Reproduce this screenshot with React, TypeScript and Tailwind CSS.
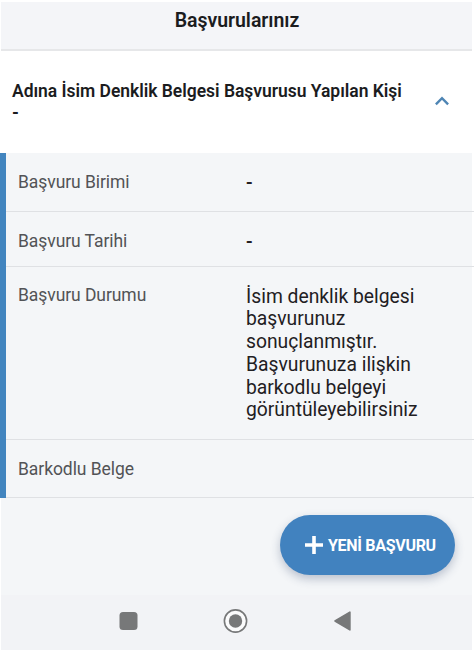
import React from 'react';
import clsx from 'clsx';

interface DetailRow {
  label: string;
  value?: string;
  rowClass: string;
  valueClass?: string;
}

const rows: DetailRow[] = [
  { label: 'Başvuru Birimi', value: '-', rowClass: 'h-[59px] pt-[18px]', valueClass: 'pt-px font-medium' },
  { label: 'Başvuru Tarihi', value: '-', rowClass: 'h-[55px] pt-[18px]', valueClass: 'pt-px font-medium' },
  {
    label: 'Başvuru Durumu',
    value: 'İsim denklik belgesi başvurunuz sonuçlanmıştır. Başvurunuza ilişkin barkodlu belgeyi görüntüleyebilirsiniz',
    rowClass: 'h-[173px] pt-[17px]',
    valueClass: 'mt-[1.5px]',
  },
  { label: 'Barkodlu Belge', rowClass: 'h-[58px] pt-[18px]' },
];

const Header: React.FC = () => (
  <header className="h-[49px] border-b-2 border-[#e6e7e9] bg-[#f4f5f8] pt-[7px] text-center">
    <h1 className="pl-px text-[19.5px] leading-6 font-semibold tracking-[-0.03px] text-[#1b1c1e]">Başvurularınız</h1>
  </header>
);

const NavigationBar: React.FC = () => (
  <nav className="flex h-[55px] bg-[#f2f3f6] pt-[9px] pl-[117px]">
    <button className="flex h-[34px] w-[20px] items-center justify-center">
      <svg width="20" height="18" viewBox="0 0 20 18" fill="#777879">
        <rect x="1.5" width="18" height="18" rx="3.5" />
      </svg>
    </button>
    <button className="ml-[84px] flex h-[34px] w-[26px] items-center justify-center">
      <svg width="26" height="26" viewBox="0 0 26 26">
        <circle cx="13.5" cy="13" r="11.1" fill="#fbfbfc" stroke="#777879" strokeWidth="1.6" />
        <circle cx="13.5" cy="13" r="6.7" fill="#777879" />
      </svg>
    </button>
    <button className="ml-[84px] flex h-[34px] w-[20px] items-center justify-center">
      <svg width="20" height="22" viewBox="0 0 20 22">
        <path d="M3 11 L17.9 2.1 V19.9 Z" fill="#777879" stroke="#777879" strokeWidth="1.6" strokeLinejoin="round" />
      </svg>
    </button>
  </nav>
);

export default function App() {
  return (
    <div className="h-[651px] w-[474px] overflow-hidden bg-white pt-[2px] font-['Roboto',sans-serif]">
      <div className="mr-[2px] ml-px flex h-[648px] flex-col bg-[#f4f6f8]">
        <Header />

        {/* Accordion header */}
        <section className="flex h-[102px] justify-between bg-white pt-[29px] pr-[23px] pl-[11px]">
          <h2 className="text-[17.5px] leading-[22px] font-semibold tracking-[-0.03px] whitespace-nowrap text-[#1b1c1e]">
            Adına İsim Denklik Belgesi Başvurusu Yapılan Kişi
            <br />
            <span className="font-bold">-</span>
          </h2>
          <svg className="mt-4" width="14" height="10" viewBox="0 0 14 10" fill="none">
            <path d="M0.9 8.4 L7 2.2 L13.1 8.4" stroke="#4e85b4" strokeWidth="2.4" />
          </svg>
        </section>

        {/* Accordion content */}
        <section className="-ml-px border-l-[6px] border-[#4285bf]">
          {rows.map((row) => (
            <div
              key={row.label}
              className={clsx('-mr-[2px] flex border-b border-[#dfe1e4] pl-[12px]', row.rowClass)}
            >
              <div className="w-[228px] shrink-0 text-[17.5px] leading-[23px] tracking-[-0.07px] text-[#525356]">
                {row.label}
              </div>
              <div className={clsx('w-[190px] text-[19.3px] leading-[22.8px] text-[#1f2023]', row.valueClass)}>
                {row.value}
              </div>
            </div>
          ))}
        </section>

        {/* New application */}
        <div className="flex flex-1 justify-end pt-[17px] pr-[17px]">
          <button className="flex h-[60px] w-[175px] items-center rounded-full bg-[#4182bf] pl-[25px] text-white shadow-[0_4px_10px_rgba(50,70,110,0.3)]">
            <svg width="18" height="18" viewBox="0 0 18 18" stroke="currentColor" strokeWidth="3.6">
              <path d="M9 0 V18 M0 9 H18" />
            </svg>
            <span className="mt-px ml-[5px] text-[16px] leading-5 font-bold tracking-[-0.3px] whitespace-nowrap">
              YENİ BAŞVURU
            </span>
          </button>
        </div>

        <NavigationBar />
      </div>
    </div>
  );
}
